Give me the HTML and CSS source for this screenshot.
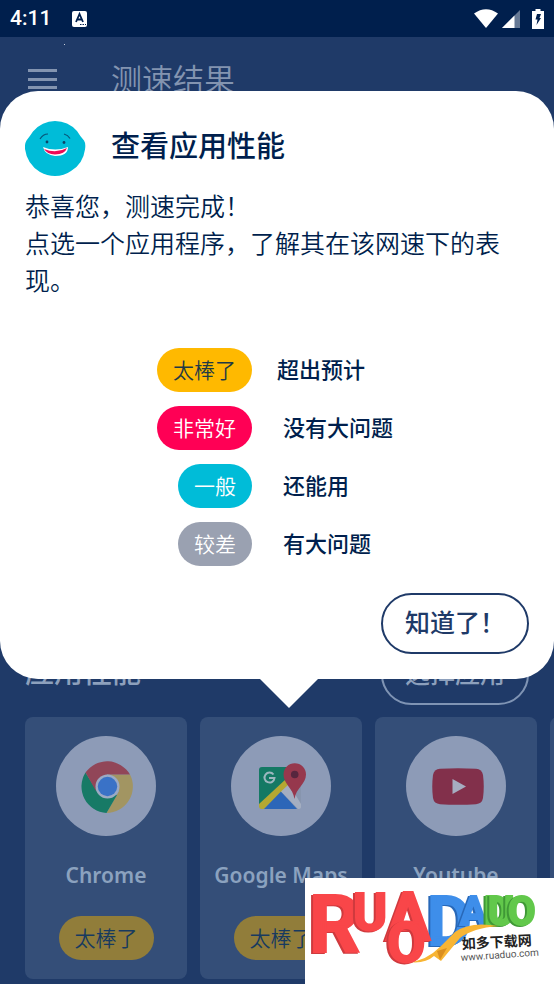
FILE: index.html
```html
<!DOCTYPE html>
<html lang="zh-CN">
<head>
<meta charset="utf-8">
<meta name="viewport" content="width=device-width, initial-scale=1">
<title>测速结果</title>
<link rel="stylesheet" href="styles.css">
</head>
<body>
<div class="screen">
  <div class="status">
    <span class="clock">4:11</span>
    <svg class="keyboard" width="15" height="16" viewBox="0 0 15 16" aria-hidden="true"><rect width="15" height="16" rx="2" fill="#fff"/><path d="M4 11 7.500 3 11 11M5.300 8.500h4.400" fill="none" stroke="#001f4d" stroke-width="1.800"/><path d="M8 13.500h1.500m1 0H12m1 0h1" stroke="#001f4d"/></svg>
    <div class="signals">
      <svg width="24" height="19" viewBox="0 0 24 19" aria-hidden="true"><path d="M0 4.500Q12-4 24 4.500L12 19z" fill="#fff"/></svg>
      <svg class="cell" width="18" height="18" viewBox="0 0 18 18" aria-hidden="true"><path d="M18 0v18H0z" fill="#667995"/><path d="M12.500 5.500V18H0z" fill="#fff"/></svg>
      <svg class="battery" width="12" height="20" viewBox="0 0 12 20" aria-hidden="true"><path d="M3.500 0h5v2H12v18H0V2h3.500z" fill="#fff"/><path d="M5 5h4L7.500 9H9L4.500 16l1-5.500H3.500z" fill="#001f4d"/></svg>
    </div>
  </div>

  <header class="topbar">
    <button class="menu" type="button" aria-label="菜单">
      <svg width="29" height="21" viewBox="0 0 29 21"><path d="M0 1.500h29M0 10.500h29M0 18.500h29" stroke="#8394b0" stroke-width="3"/></svg>
    </button>
    <h1>测速结果</h1>
  </header>

  <main class="results">
    <div class="section-head">
      <h2>应用性能</h2>
      <button class="outline dim" type="button">选择应用</button>
    </div>
    <ul class="apps">
      <li class="card">
        <span class="disc">
          <svg width="53" height="53" viewBox="0 0 53 53" aria-hidden="true">
            <path d="M26.500 14.500H49A26.500 26.500 0 0 1 25.500 53L38 31z" fill="#a29562"/>
            <path d="M4.500 12.500A26.500 26.500 0 0 0 25.500 53L36 35 26.500 32 16 31z" fill="#177a66"/>
            <path d="M26 14.500h23A26.500 26.500 0 0 0 4.500 12.500L15 31z" fill="#914658"/>
            <circle cx="26.500" cy="26.500" r="12" fill="#9caac4"/><circle cx="26.500" cy="26.500" r="9.700" fill="#3a72c7"/>
          </svg>
        </span>
        <span class="name">Chrome</span>
        <span class="pill dim-gold">太棒了</span>
      </li>
      <li class="card">
        <span class="disc">
          <svg width="47" height="47" viewBox="0 0 47 47" aria-hidden="true">
            <rect y="4" width="42" height="42" rx="3" fill="#8795ae"/>
            <path d="M3 4h25l2 12L0 44V7q0-3 3-3z" fill="#147964"/>
            <path d="M0 41 27 16l5 5L5 46H3q-3 0-3-3z" fill="#b5a832"/>
            <path d="M5 46 22 28.500 38 46z" fill="#2c66b8"/>
            <path d="M22 28.500 30 21l12 20v3q0 2-3 2z" fill="#a4aec1"/>
            <path d="M14.500 11.500A5 5 0 1 0 15.500 15H10" fill="none" stroke="#9cb7bf" stroke-width="2"/>
            <path d="M35.500 36C34 25 24.500 21 24.500 11.500a11.200 11.200 0 0 1 22.500 0C47 21 37 25 35.500 36z" fill="#96384d"/>
            <circle cx="35.700" cy="11.500" r="3.800" fill="#57263e"/>
          </svg>
        </span>
        <span class="name">Google Maps</span>
        <span class="pill dim-gold">太棒了</span>
      </li>
      <li class="card">
        <span class="disc">
          <svg width="52" height="37" viewBox="0 0 52 37" aria-hidden="true"><path d="M8 .8Q26-.5 44 .8q6 .5 7 6.200 1.500 11.500 0 23-1 5.700-7 6.200-18 1.300-36 0-6-.5-7-6.200Q-.5 18.500 1 7 2 1.300 8 .8z" fill="#82304b"/><path d="m20.500 11 13.500 7.500L20.500 26z" fill="#a6adc1"/></svg>
        </span>
        <span class="name">Youtube</span>
        <span class="pill dim-gold">太棒了</span>
      </li>
      <li class="card"></li>
    </ul>
  </main>

  <section class="dialog" role="dialog" aria-labelledby="dialog-title">
    <div class="dialog-head">
      <svg width="61" height="55" viewBox="0 0 61 55" aria-hidden="true">
        <path d="M30 0Q43 0 52 10 55 15 59 19.500q2 3 1 9Q58 43 46 50q-7 5-16 5-8 0-15-4Q2 43 0 28q-.5-5 1.500-8.500Q5 15 8 10.500 17 0 30 0z" fill="#00bcd8"/>
        <path d="M15 18q3-5 8-5M39 13q4 1 6 4.500" fill="none" stroke="#075578" stroke-width="1.200"/>
        <circle cx="22" cy="21" r="1.400" fill="#0a4468"/><circle cx="39" cy="21.500" r="1.400" fill="#0a4468"/>
        <path d="M18 26q12 5 25 0 0 9-13 9-10-1-12-9z" fill="#fff"/>
        <path d="M19 28q12 5 23-1-2 6-12 6.500-8-.5-11-5.500z" fill="#ee0a55"/>
      </svg>
      <h2 id="dialog-title">查看应用性能</h2>
    </div>
    <p class="message">恭喜您，测速完成！<br>点选一个应用程序，了解其在该网速下的表现。</p>
    <dl class="legend">
      <dt class="pill gold">太棒了</dt><dd class="lead">超出预计</dd>
      <dt class="pill pink">非常好</dt><dd>没有大问题</dd>
      <dt class="pill teal">一般</dt><dd>还能用</dd>
      <dt class="pill gray">较差</dt><dd>有大问题</dd>
    </dl>
    <button class="outline confirm" type="button">知道了！</button>
  </section>

  <div class="badge">
    <svg width="249" height="106" viewBox="0 0 249 106" role="img" aria-label="如多下载网">
      <g class="letters">
        <text class="red" x="4" y="74" font-size="80">R</text>
        <text class="red" x="48" y="52" font-size="52">U</text>
        <text class="blue" x="122" y="67" font-size="69">D</text>
        <text class="red" x="81" y="62" font-size="66">A</text>
        <text class="blue" x="155" y="47" font-size="40">A</text>
        <text class="green" x="179" y="47" font-size="40">D</text>
        <text class="green" x="183" y="47" font-size="40">U</text>
        <text class="green" x="203" y="47" font-size="40">O</text>
      </g>
      <path d="M104 84Q121 83 136 68L150 54Q165 43 193 48 168 50 155 60L136 83 129 78Q120 86 104 84z" fill="#f8b534"/>
      <path d="m132 73 10-3-7 12z" fill="#db8f1f"/>
      <g class="letters"><text class="red" x="82" y="84" font-size="56">O</text></g>
      <text class="site-name" x="157" y="71" transform="rotate(-3 157 71)">如多下载网</text>
      <text class="site-url" x="156" y="83" transform="rotate(-4 156 83)">www.ruaduo.com</text>
    </svg>
  </div>
</div>
</body>
</html>
```
FILE: styles.css
```css
* { box-sizing: border-box; }

body {
  margin: 0;
  background: #1f3a68;
  color: #001f4d;
  font-family: "Noto Sans", "Noto Sans CJK SC", sans-serif;
}

h1, h2, p, dl, dd, ul { margin: 0; padding: 0; }
button { font-family: inherit; cursor: pointer; }
svg { display: block; }

.screen {
  position: relative;
  display: flex;
  flex-direction: column;
  min-height: 100vh;
  overflow: hidden;
}

.status {
  display: flex;
  align-items: center;
  height: 37px;
  padding: 0 10px;
  background: #001f4d;
  color: #fff;
}
.clock { font: 500 21px/39px Roboto, sans-serif; }
.keyboard { margin-left: 21px; }
.signals { display: flex; align-items: center; margin-left: auto; }
.cell { margin-left: 4px; }
.battery { margin-left: 12px; }

.topbar {
  position: relative;
  display: flex;
  align-items: center;
  gap: 54px;
  height: 84px;
  padding: 0 28px;
}
.topbar::before {
  content: "";
  position: absolute;
  top: 7px;
  left: 64px;
  width: 1px;
  height: 1px;
  background: #c5cedb;
}
.menu { padding: 0; border: 0; background: none; }
.topbar h1 {
  color: #8394b0;
  font-size: 31px;
  font-weight: 350;
  line-height: 40px;
}

.results {
  display: flex;
  flex: 1;
  flex-direction: column;
  justify-content: flex-end;
  gap: 12px;
  padding: 0 0 5px 25px;
}
.section-head {
  display: flex;
  align-items: center;
  justify-content: space-between;
  padding-right: 25px;
}
.section-head h2 {
  padding-bottom: 6px;
  color: #8da0bc;
  font-size: 29px;
  font-weight: 500;
  line-height: 40px;
}

.outline {
  height: 61px;
  padding: 0 22px 4px;
  border: 2px solid #1f3a68;
  border-radius: 31px;
  background: none;
  color: #1f3a68;
  font-size: 25px;
  font-weight: 500;
  line-height: 36px;
}
.dim { border-color: #7f94b4; color: #8da0bc; }

.apps {
  display: flex;
  gap: 13px;
  overflow: hidden;
  list-style: none;
}
.card {
  display: flex;
  flex: 0 0 162px;
  flex-direction: column;
  align-items: center;
  padding: 19px 0 19px;
  border-radius: 8px;
  background: #344e78;
}
.disc {
  display: grid;
  place-items: center;
  width: 100px;
  height: 100px;
  padding-left: 3px;
  border-radius: 50%;
  background: #8d9bb7;
}
.name {
  margin: 23px 0 25px;
  color: #8ba2bf;
  font-size: 21px;
  font-weight: 600;
  line-height: 32px;
  white-space: nowrap;
}

.pill {
  padding: 0 16px;
  border-radius: 22px;
  color: #fff;
  font-size: 21px;
  font-weight: 350;
  line-height: 44px;
}
.gold { background: #ffb900; color: #1f3a45; }
.pink { background: #ff0055; }
.teal { background: #00bcd8; }
.gray { background: #9aa1b1; }
.dim-gold { background: #917d3a; color: #173a60; }

.dialog {
  position: absolute;
  top: 91px;
  left: 0;
  right: 0;
  display: flex;
  flex-direction: column;
  padding: 30px 25px 25px;
  border-radius: 38px;
  background: #fff;
}
.dialog::after {
  content: "";
  position: absolute;
  top: 100%;
  left: 259px;
  width: 60px;
  height: 30px;
  margin-top: -1px;
  background: #fff;
  clip-path: polygon(0 0, 100% 0, 50% 100%);
}
.dialog-head { display: flex; align-items: center; gap: 25px; }
.dialog-head h2 {
  padding-bottom: 6px;
  font-size: 29px;
  font-weight: 500;
  line-height: 48px;
}
.message {
  margin-top: 12px;
  font-size: 25px;
  font-weight: 350;
  line-height: 37px;
}

.legend {
  display: grid;
  grid-template-columns: 227px 1fr;
  row-gap: 14px;
  margin-top: 49px;
}
.legend dt { justify-self: end; }
.legend dd {
  padding-left: 31px;
  font-size: 22px;
  font-weight: 500;
  line-height: 42px;
}
.legend .lead { padding-left: 25px; }
.confirm { align-self: flex-end; margin-top: 27px; }

.badge {
  position: absolute;
  right: 0;
  bottom: 0;
  background: #fff;
}
.letters text {
  font-family: Roboto, sans-serif;
  font-weight: 700;
  stroke-width: 2px;
}
.red { fill: #f94649; stroke: #f94649; filter: drop-shadow(-2px 1px 0 #cf3a3e); }
.blue { fill: #3e8eea; stroke: #3e8eea; filter: drop-shadow(-2px 1px 0 #2868b8); }
.green { fill: #62c84b; stroke: #62c84b; filter: drop-shadow(-2px 1px 0 #3f9836); }
.site-name { fill: #222; font-size: 14px; font-weight: 700; }
.site-url { fill: #555; font: 10px Roboto, sans-serif; }
```
